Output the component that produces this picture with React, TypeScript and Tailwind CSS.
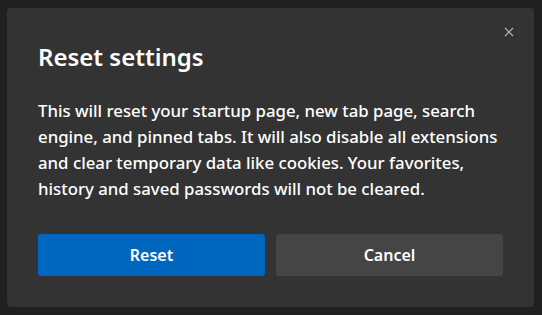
import React from "react";

export default function App() {
  return (
    <div className="w-[542px] h-[315px] bg-[#202020] pt-[8px] pl-[7px] font-['Noto_Sans',sans-serif]">
      <div className="relative w-[527px] h-[299px] bg-[#333333] rounded-[4px] px-[31px] pt-[32px]">
        <button className="absolute top-[18px] right-[19px] w-[12px] h-[12px] flex items-center justify-center text-[#b5b5b5]">
          <svg width="10" height="10" viewBox="0 0 10 10" fill="none" stroke="currentColor" strokeWidth="1.2">
            <path d="M1 1 L9 9 M9 1 L1 9" />
          </svg>
        </button>
        <h1 className="text-white text-[24px] font-semibold leading-[34px]">Reset settings</h1>
        <p className="mt-[24px] text-white text-[16.8px] font-medium leading-[26px] w-[470px] whitespace-nowrap">
          This will reset your startup page, new tab page, search
          <br />
          engine, and pinned tabs. It will also disable all extensions
          <br />
          and clear temporary data like cookies. Your favorites,
          <br />
          history and saved passwords will not be cleared.
        </p>
        <div className="mt-[32px] flex gap-[11px] w-[465px]">
          <button className="flex-1 h-[42px] rounded-[3px] bg-[#0067c0] text-white text-[16px] font-semibold">
            Reset
          </button>
          <button className="flex-1 h-[42px] rounded-[3px] bg-[#454545] text-white text-[16px] font-semibold">
            Cancel
          </button>
        </div>
      </div>
    </div>
  );
}
